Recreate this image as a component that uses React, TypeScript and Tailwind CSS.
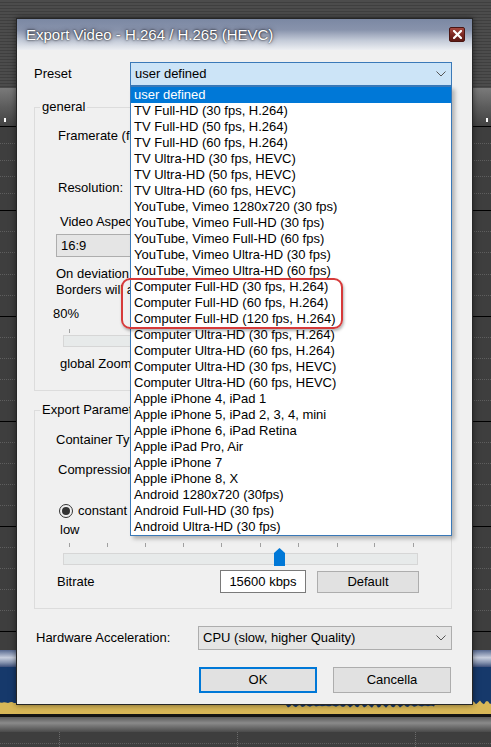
import React from "react";

const PRESETS = [
  "user defined",
  "TV Full-HD (30 fps, H.264)",
  "TV Full-HD (50 fps, H.264)",
  "TV Full-HD (60 fps, H.264)",
  "TV Ultra-HD (30 fps, HEVC)",
  "TV Ultra-HD (50 fps, HEVC)",
  "TV Ultra-HD (60 fps, HEVC)",
  "YouTube, Vimeo 1280x720 (30 fps)",
  "YouTube, Vimeo Full-HD (30 fps)",
  "YouTube, Vimeo Full-HD (60 fps)",
  "YouTube, Vimeo Ultra-HD (30 fps)",
  "YouTube, Vimeo Ultra-HD (60 fps)",
  "Computer Full-HD (30 fps, H.264)",
  "Computer Full-HD (60 fps, H.264)",
  "Computer Full-HD (120 fps, H.264)",
  "Computer Ultra-HD (30 fps, H.264)",
  "Computer Ultra-HD (60 fps, H.264)",
  "Computer Ultra-HD (30 fps, HEVC)",
  "Computer Ultra-HD (60 fps, HEVC)",
  "Apple iPhone 4, iPad 1",
  "Apple iPhone 5, iPad 2, 3, 4, mini",
  "Apple iPhone 6, iPad Retina",
  "Apple iPad Pro, Air",
  "Apple iPhone 7",
  "Apple iPhone 8, X",
  "Android 1280x720 (30fps)",
  "Android Full-HD (30 fps)",
  "Android Ultra-HD (30 fps)",
];

const TICKS = [0, 38, 76, 114, 152, 191, 229, 268, 305, 344];

// waveform top edge, a bit lower in the middle stretch
const WAVE = (() => {
  const pts: string[] = ["0,14"];
  for (let x = 0; x <= 492; x += 2) {
    const base = x > 285 && x < 435 ? 6 : 2.5;
    const n = Math.sin(x * 0.9) * 1.1 + Math.sin(x * 2.3) * 0.8;
    pts.push(`${x},${(base + n).toFixed(1)}`);
  }
  pts.push("492,14");
  return pts.join(" ");
})();

function Chevron() {
  return (
    <svg width="10" height="6" viewBox="0 0 10 6" className="shrink-0">
      <polyline points="0.5,0.5 5,5 9.5,0.5" fill="none" stroke="#555" strokeWidth="1" />
    </svg>
  );
}

function Track({ h }: { h: string }) {
  return (
    <div className={`${h} flex flex-col justify-evenly border-t border-black bg-[#3e3e3e]`}>
      <div className="border-t border-dotted border-[#5e5e5e]" />
      <div className="border-t border-dotted border-[#5e5e5e]" />
      <div className="border-t border-dotted border-[#5e5e5e]" />
      <div className="border-t border-dotted border-[#5e5e5e]" />
    </div>
  );
}

function Backdrop() {
  return (
    <div className="flex flex-col">
      <div className="h-[88px] bg-[repeating-linear-gradient(to_bottom,#4c4c4c_0px,#4c4c4c_2px,#3f3f3f_2px,#3f3f3f_3px)]" />
      <div className="relative h-[38px] bg-[linear-gradient(to_bottom,#7a7a7a,#5c5c5c_50%,#424242)]">
        <div className="absolute left-[4px] top-[30px] h-[4px] w-[2px] bg-white" />
        <div className="absolute left-[486px] top-[30px] h-[4px] w-[2px] bg-white" />
      </div>
      <Track h="h-[84px]" />
      <Track h="h-[106px]" />
      <Track h="h-[105px]" />
      <Track h="h-[105px]" />
      <Track h="h-[105px]" />
      <div className="h-[19px] border-t border-black bg-[#3e3e3e]" />
      <div className="h-[17px] bg-[linear-gradient(to_bottom,#56688f,#c7cedd_45%,#8391ad_75%,#3c4f7a)]" />
      <div className="h-[33px] bg-[#16396b]" />
      <svg width="491" height="14" viewBox="0 0 491 14" className="block bg-[#16396b]">
        <polygon points={WAVE} fill="#d8b757" />
      </svg>
      <div className="h-[3px] bg-[#141414]" />
      <div className="h-[15px] bg-[linear-gradient(to_bottom,#5a5a5a,#8a8a8a_40%,#6a6a6a_70%,#4a4a4a)]" />
      <div className="relative h-[15px] bg-[#3e3e3e]">
        <div className="absolute left-0 right-0 top-[11px] border-t border-dotted border-[#5e5e5e]" />
        <div className="absolute left-[59px] top-0 bottom-0 border-l border-dotted border-[#6a6a6a]" />
        <div className="absolute left-[237px] top-0 bottom-0 border-l border-dotted border-[#6a6a6a]" />
        <div className="absolute left-[415px] top-0 bottom-0 border-l border-dotted border-[#6a6a6a]" />
      </div>
    </div>
  );
}

function PresetList() {
  return (
    <div className="absolute left-0 top-[24px] z-10 w-[322px] border border-[#3a79b8] bg-white shadow-[3px_3px_4px_rgba(0,0,0,0.25)]">
      {PRESETS.map((p, i) => (
        <div
          key={p}
          className={
            i === 0
              ? "h-[16px] whitespace-nowrap bg-[#0078d7] pl-[3px] leading-[16px] text-white"
              : "h-[16px] whitespace-nowrap pl-[3px] leading-[16px] text-black"
          }
        >
          {p}
        </div>
      ))}
      {/* red annotation around the Computer Full-HD entries */}
      <div className="absolute left-[-10px] top-[191px] h-[51px] w-[222px] rounded-[9px] border-2 border-[#d63a3a] shadow-[1px_2px_3px_rgba(0,0,0,0.3)]" />
    </div>
  );
}

function GroupBox({ title, h, children }: { title: string; h: string; children: React.ReactNode }) {
  return (
    <div className={`relative ${h} w-[418px] border border-[#dcdcdc]`}>
      <span className="absolute left-[5px] top-[-9px] whitespace-nowrap bg-[#f0f0f0] px-[2px] leading-[16px]">{title}</span>
      {children}
    </div>
  );
}

function Dialog() {
  return (
    <div className="absolute left-[16px] top-[18px] flex h-[687px] w-[457px] flex-col border border-[#262626] shadow-[0_0_6px_rgba(0,0,0,0.5)]">
      {/* title bar */}
      <div className="flex h-[31px] shrink-0 items-start justify-between bg-[linear-gradient(to_bottom,#7b88a3,#8893ac_35%,#c5ccd9_70%,#eceef2)] pl-[9px] pr-[7px]">
        <span className="mt-[7px] text-[15px] leading-[18px] text-white [text-shadow:0_0_2px_rgba(0,0,0,0.95),0_0_5px_rgba(30,30,50,0.8)]">
          Export Video - H.264 / H.265 (HEVC)
        </span>
        <div className="mt-[8px] flex h-[15px] w-[16px] items-center justify-center rounded-[2px] border border-[#4a1512] bg-[linear-gradient(to_bottom,#a4483f,#7a2620_55%,#5e1a16)]">
          <svg width="9" height="9" viewBox="0 0 9 9">
            <path d="M1 1 L8 8 M8 1 L1 8" stroke="#fff" strokeWidth="2.2" strokeLinecap="square" />
          </svg>
        </div>
      </div>

      {/* client area */}
      <div className="flex flex-1 flex-col bg-[#f0f0f0] pl-[17px] pt-[12px] text-[13px] text-black">
        {/* preset */}
        <div className="flex h-[24px] items-center">
          <span className="w-[96px]">Preset</span>
          <div className="relative">
            <div className="flex h-[24px] w-[322px] items-center justify-between border border-[#3a79b8] bg-[#cce4f7] pl-[4px] pr-[5px]">
              <span>user defined</span>
              <Chevron />
            </div>
            <PresetList />
          </div>
        </div>

        {/* general */}
        <div className="mt-[21px]">
          <GroupBox title="general" h="h-[284px]">
            <div className="flex flex-col leading-[16px]">
              <span className="ml-[23px] mt-[20px] whitespace-nowrap">Framerate (fps):</span>
              <span className="ml-[23px] mt-[36px]">Resolution:</span>
              <span className="ml-[25px] mt-[18px] whitespace-nowrap">Video Aspect Ratio:</span>
              <div className="ml-[21px] mt-[4px] flex h-[23px] w-[140px] items-center border border-[#adadad] bg-[#e5e5e5] pl-[4px]">
                16:9
              </div>
              <span className="ml-[21px] mt-[9px] whitespace-nowrap">On deviation the picture is zoomed.</span>
              <span className="ml-[21px] whitespace-nowrap">Borders will appear.</span>
              <span className="ml-[18px] mt-[8px]">80%</span>
              <div className="ml-[34px] mt-[7px] h-[4px] w-px bg-[#a0a0a0]" />
              <div className="ml-[28px] mt-[2px] h-[12px] w-[355px] border border-[#d6d6d6] bg-[#e7eaea]" />
              <span className="ml-[25px] mt-[9px] whitespace-nowrap">global Zoom</span>
            </div>
          </GroupBox>
        </div>

        {/* export parameters */}
        <div className="mt-[19px]">
          <GroupBox title="Export Parameters" h="h-[199px]">
            <div className="flex flex-col leading-[16px]">
              <span className="ml-[21px] mt-[21px] whitespace-nowrap">Container Type:</span>
              <span className="ml-[23px] mt-[14px] whitespace-nowrap">Compression:</span>
              <div className="ml-[24px] mt-[25px] flex h-[16px] items-center gap-[5px]">
                <div className="flex h-[14px] w-[14px] items-center justify-center rounded-full border border-[#333]">
                  <div className="h-[8px] w-[8px] rounded-full bg-[#333]" />
                </div>
                <span className="whitespace-nowrap">constant Bitrate</span>
              </div>
              <span className="ml-[25px] mt-[3px]">low</span>
              <div className="relative ml-[34px] mt-[5px] h-[4px] w-[345px]">
                {TICKS.map((t) => (
                  <div key={t} className="absolute top-0 h-[4px] w-px bg-[#a0a0a0]" style={{ left: t }} />
                ))}
              </div>
              <div className="relative ml-[28px] mt-[6px] h-[12px] w-[355px] border border-[#d6d6d6] bg-[#e7eaea]">
                <svg width="11" height="18" viewBox="0 0 11 18" className="absolute left-[210px] top-[-6px]">
                  <path d="M0 5 L5.5 0 L11 5 L11 18 L0 18 Z" fill="#0078d7" />
                </svg>
              </div>
              <div className="mt-[5px] flex h-[23px] items-center">
                <span className="ml-[22px] w-[163px]">Bitrate</span>
                <div className="flex h-[23px] w-[86px] items-center justify-center border border-[#7a7a7a] bg-white">
                  15600 kbps
                </div>
                <div className="ml-[11px] flex h-[22px] w-[102px] items-center justify-center border border-[#adadad] bg-[#e1e1e1]">
                  Default
                </div>
              </div>
            </div>
          </GroupBox>
        </div>

        {/* hardware */}
        <div className="mt-[17px] flex h-[24px] items-center">
          <span className="ml-[2px] w-[162px] whitespace-nowrap">Hardware Acceleration:</span>
          <div className="flex h-[24px] w-[254px] items-center justify-between border border-[#adadad] bg-[#e5e5e5] pl-[4px] pr-[5px]">
            <span>CPU (slow, higher Quality)</span>
            <Chevron />
          </div>
        </div>

        {/* buttons */}
        <div className="mt-[17px] flex h-[26px]">
          <div className="ml-[165px] flex h-[26px] w-[118px] items-center justify-center border-2 border-[#0078d7] bg-[#e1e1e1]">
            OK
          </div>
          <div className="ml-[16px] flex h-[26px] w-[118px] items-center justify-center border border-[#adadad] bg-[#e1e1e1]">
            Cancella
          </div>
        </div>
      </div>
    </div>
  );
}

export default function App() {
  return (
    <div className="relative h-[747px] w-[491px] overflow-hidden bg-[#3e3e3e] font-['Liberation_Sans',Arial,sans-serif]">
      <Backdrop />
      <Dialog />
    </div>
  );
}
